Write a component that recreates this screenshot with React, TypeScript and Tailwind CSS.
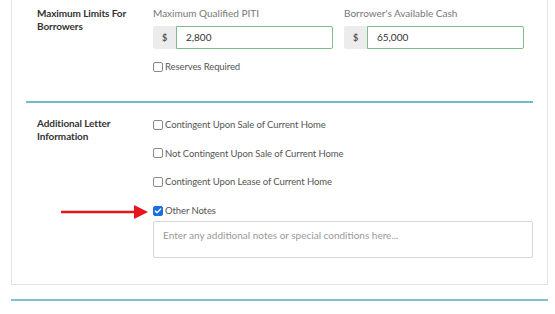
import { Check } from 'lucide-react';

function Box({ checked, label }: { checked?: boolean; label: string }) {
  return (
    <label className="flex items-center h-[13px] text-[9.5px] tracking-[-0.1px] text-[#555] leading-[13px]">
      <span
        className={`w-[10px] h-[10px] rounded-[2px] mr-[2px] flex items-center justify-center ${
          checked ? 'bg-[#1b6fe0] border border-[#1b6fe0]' : 'border border-[#8a8a8a] bg-white'
        }`}
      >
        {checked && <Check className="w-[8px] h-[8px] text-white" strokeWidth={4} />}
      </span>
      {label}
    </label>
  );
}

function MoneyInput({ label, value }: { label: string; value: string }) {
  return (
    <div className="w-[180px]">
      <div className="text-[10px] leading-[13px] text-[#777]">{label}</div>
      <div className="flex mt-[6px] h-[23px]">
        <div className="w-[23px] bg-[#ececec] rounded-l-[2px] flex items-center justify-center text-[9px] font-bold text-[#555]">$</div>
        <div className="flex-1 border border-[#7fbb8c] rounded-r-[2px] flex items-center pl-[9px] text-[10px] text-[#333]">
          {value}
        </div>
      </div>
    </div>
  );
}

export default function App() {
  return (
    <div className="w-[555px] h-[314px] bg-white overflow-hidden font-['Lato',sans-serif]">
      <div className="ml-[11px] mr-[7px] border-x border-b border-[#e2e2e2] pl-[14px] pr-[14px] pb-[26px]">
        {/* Maximum limits */}
        <div className="flex pt-[7px] pb-[28px]">
          <div className="w-[127px] pl-[11px] text-[10px] leading-[13px] font-bold text-[#333] tracking-[-0.1px]">
            Maximum Limits For
            <br />
            Borrowers
          </div>
          <div className="flex-1">
            <div className="flex gap-[11px]">
              <MoneyInput label="Maximum Qualified PITI" value="2,800" />
              <MoneyInput label="Borrower's Available Cash" value="65,000" />
            </div>
            <div className="mt-[11px]">
              <Box label="Reserves Required" />
            </div>
          </div>
        </div>

        <div className="h-[2px] bg-[#6dbbcb]" />

        {/* Additional letter info */}
        <div className="relative flex pt-[14px]">
          <div className="w-[127px] pl-[11px] text-[10px] leading-[13px] font-bold text-[#333] tracking-[-0.1px]">
            Additional Letter
            <br />
            Information
          </div>
          <div className="flex-1 pt-[1px] flex flex-col">
            <div className="flex flex-col gap-[15.7px]">
              <Box label="Contingent Upon Sale of Current Home" />
              <Box label="Not Contingent Upon Sale of Current Home" />
              <Box label="Contingent Upon Lease of Current Home" />
              <Box checked label="Other Notes" />
            </div>
            <div className="mt-[4px] h-[37px] border border-[#d6d6d6] rounded-[2px] px-[9px] pt-[6px] text-[10px] text-[#999]">
              Enter any additional notes or special conditions here...
            </div>
          </div>
          <svg className="absolute left-[34px] top-[101px]" width="90" height="16" viewBox="0 0 90 16">
            <line x1="1" y1="8" x2="76" y2="8" stroke="#e5171b" strokeWidth="2.5" />
            <polygon points="74,1 88,8 74,15" fill="#e5171b" />
          </svg>
        </div>
      </div>
      <div className="ml-[11px] mr-[7px] mt-[14px] h-[2px] bg-[#7ec3d1]" />
    </div>
  );
}
